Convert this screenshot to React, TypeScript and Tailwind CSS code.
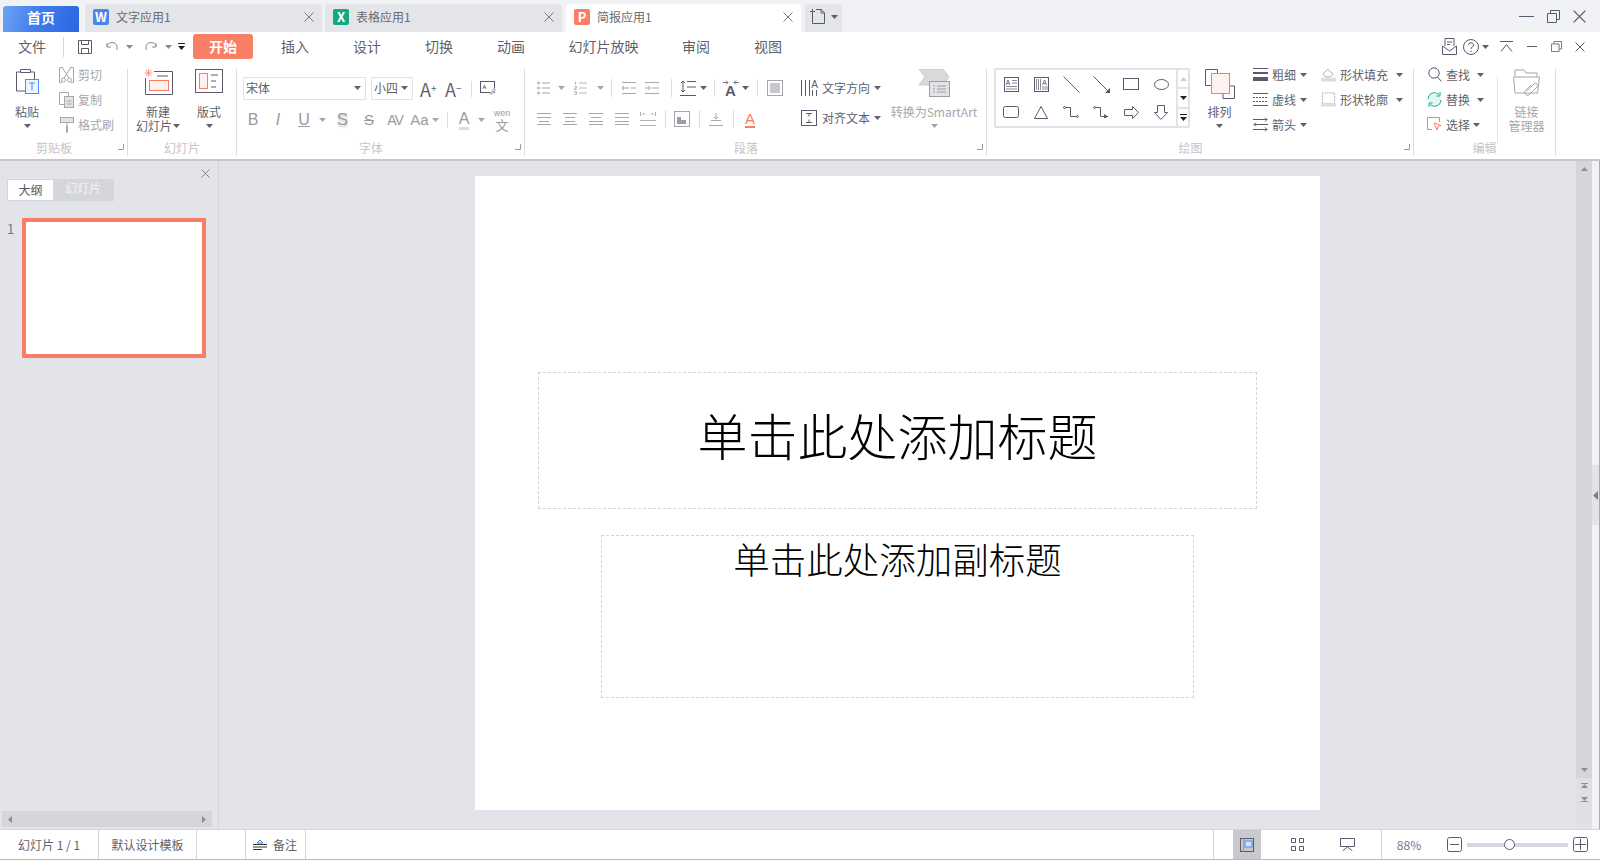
import type { ReactNode } from 'react'

const INK = '#5a5a6e'
const GRAY = '#a6a6ac'
const CORAL = '#f97e66'
const PINK = '#fef1ee'
const BLUE = '#4a8df0'

const Caret = ({ color = '#5f5f6e' }: { color?: string }) => (
  <svg width="7" height="4" viewBox="0 0 7 4" className="shrink-0">
    <path d="M0 0h7L3.5 4z" fill={color} />
  </svg>
)

const Close = ({ size = 10, color = '#77777f' }: { size?: number; color?: string }) => (
  <svg width={size} height={size} viewBox="0 0 10 10">
    <path d="M.5.5l9 9M9.5.5l-9 9" stroke={color} fill="none" />
  </svg>
)

const Restore = ({ size = 13 }: { size?: number }) => (
  <svg width={size} height={size} viewBox="0 0 13 13" fill="none" stroke={INK}>
    <path d="M.5 3.5h9v9h-9zM3.5 3V.5h9v9H10" />
  </svg>
)

const Sep = ({ className = 'h-[18px]' }: { className?: string }) => (
  <div className={`w-px bg-[#dcdde1] ${className}`} />
)

const Cell = ({ className, children }: { className: string; children?: ReactNode }) => (
  <div className={`flex h-full shrink-0 items-center justify-center ${className}`}>{children}</div>
)

const Tab = ({
  icon,
  title,
  className,
  active,
}: {
  icon: ReactNode
  title: string
  className: string
  active?: boolean
}) => (
  <div
    className={`flex h-[28px] items-center rounded-t-[3px] pr-[8px] pb-[3px] pl-[8px] text-[12px] text-[#6a6a74] ${
      active ? 'bg-white' : 'bg-[#e4e5e9]'
    } ${className}`}
  >
    {icon}
    <span className="ml-[7px]">{title}</span>
    <span className="ml-auto">
      <Close />
    </span>
  </div>
)

const AppIcon = ({ color, letter }: { color: string; letter: string }) => (
  <span
    className="flex h-[16px] w-[16px] items-center justify-center rounded-[2px] text-[13px] leading-none font-bold text-white"
    style={{ backgroundColor: color }}
  >
    {letter}
  </span>
)

const Group = ({
  className,
  label,
  launcher,
  children,
}: {
  className: string
  label: string
  launcher?: boolean
  children: ReactNode
}) => (
  <div className={`relative flex h-[87px] shrink-0 flex-col border-r border-[#dcdde1] ${className}`}>
    <div className="flex h-[71px]">{children}</div>
    <div className={`h-[16px] text-center text-[12px] leading-[16px] text-[#c4c4c9] ${launcher ? 'pr-[19px]' : ''}`}>
      {label}
    </div>
    {launcher && (
      <svg width="6" height="6" viewBox="0 0 6 6" className="absolute right-[3px] bottom-[6px]">
        <path d="M5.5 0v5.5H0" stroke="#9a9aa0" fill="none" />
      </svg>
    )}
  </div>
)

const Large = ({
  icon,
  lines,
  className,
  gray,
  caret = true,
}: {
  icon: ReactNode
  lines: string[]
  className: string
  gray?: boolean
  caret?: boolean
}) => (
  <div className={`flex shrink-0 flex-col items-center ${className}`}>
    <div className="flex h-[36px] items-start justify-center">{icon}</div>
    {lines.map((line) => (
      <div
        key={line}
        className={`flex h-[14px] items-center whitespace-nowrap text-[12px] leading-[14px] ${
          gray ? 'text-[#a6a6ac]' : 'text-[#5f5f6c]'
        }`}
      >
        {line}
        {lines.length === 2 && line === lines[1] && caret && (
          <span className="ml-[1px]">
            <Caret />
          </span>
        )}
      </div>
    ))}
    {lines.length === 1 && caret && (
      <div className="flex h-[14px] items-center">
        <Caret color={gray ? GRAY : undefined} />
      </div>
    )}
  </div>
)

const Row = ({
  icon,
  text,
  gray,
  caretClass,
}: {
  icon: ReactNode
  text: string
  gray?: boolean
  caretClass?: string
}) => (
  <div className="flex h-[25px] items-center">
    <span className="flex w-[15px] shrink-0 justify-center">{icon}</span>
    <span className={`ml-[4px] whitespace-nowrap text-[12px] ${gray ? 'text-[#a6a6ac]' : 'text-[#5f5f6c]'}`}>
      {text}
    </span>
    {caretClass && (
      <span className={`flex ${caretClass}`}>
        <Caret />
      </span>
    )}
  </div>
)

/* ---------- ribbon icons ---------- */

const PasteIcon = () => (
  <svg width="23" height="25" viewBox="0 0 23 25" fill="none">
    <path d="M4 3H.5v19H9M15 3h3.5v7" stroke={INK} />
    <path d="M4.5.5h10v3h-10z" stroke={INK} />
    <rect x="9.5" y="10.5" width="13" height="14" fill="#eef5ff" stroke={BLUE} />
    <path d="M13 14h6M16 14v7.5" stroke={BLUE} />
  </svg>
)
const CutIcon = () => (
  <svg width="15" height="16" viewBox="0 0 15 16" fill="none" stroke={GRAY}>
    <path d="M4 .5H.5v15H3M11 .5h3.5v15H12M3.5 1l6.5 10M11.5 1L5 11" />
    <circle cx="4.5" cy="13" r="2" />
    <circle cx="10.5" cy="13" r="2" />
  </svg>
)
const CopyIcon = () => (
  <svg width="15" height="16" viewBox="0 0 15 16" fill="none" stroke={GRAY}>
    <path d="M5 12.5H.5V.5h9v4" />
    <rect x="5.5" y="4.5" width="9" height="11" fill="#e3e3e6" />
    <path d="M7.5 9h5M7.5 12h5" />
  </svg>
)
const BrushIcon = () => (
  <svg width="14" height="16" viewBox="0 0 14 16" fill="none">
    <rect x=".5" y=".5" width="13" height="5" fill="#e3e3e6" stroke={GRAY} />
    <path d="M7 6v3.5" stroke={GRAY} />
    <path d="M6 9h2v6l-1 1-1-1z" fill={GRAY} />
  </svg>
)
const NewSlideIcon = () => (
  <svg width="29" height="26" viewBox="0 0 29 26" fill="none">
    <path d="M10 2.5h18.5v23H1.5V9" stroke={INK} />
    <path d="M13 7h11" stroke={INK} />
    <rect x="5.5" y="11.5" width="19" height="10" fill={PINK} stroke={CORAL} />
    <path d="M4.5 0v8M.5 4h8M1.5 1l6 6M7.5 1l-6 6" stroke={CORAL} strokeWidth=".8" />
  </svg>
)
const LayoutIcon = () => (
  <svg width="28" height="24" viewBox="0 0 28 24" fill="none">
    <rect x=".5" y=".5" width="27" height="23" stroke={INK} />
    <rect x="4.5" y="4.5" width="8" height="15" fill={PINK} stroke={CORAL} />
    <path d="M16 6h7M16 12h5M16 18h5" stroke={INK} />
  </svg>
)
const AbIcon = () => (
  <svg width="16" height="15" viewBox="0 0 16 15" fill="none">
    <rect x=".5" y=".5" width="14" height="11" stroke={INK} />
    <path d="M3 8l1.5-4L6 8M3.5 6.5h2" stroke={INK} strokeWidth=".7" />
    <path d="M9 13l5-6 2 2-4 5z" fill="#c7c7cb" />
  </svg>
)
const Lines = ({ ys }: { ys: [number, number][] }) => (
  <svg width="14" height="14" viewBox="0 0 14 14" fill="none" stroke={GRAY}>
    {ys.map(([y, x], i) => (
      <path key={i} d={`M${x} ${y + 0.5}H${14 - x}`} />
    ))}
  </svg>
)
const BulletIcon = () => (
  <svg width="13" height="14" viewBox="0 0 13 14" fill="none" stroke={GRAY}>
    <circle cx="1.5" cy="2" r="1" />
    <circle cx="1.5" cy="7" r="1" />
    <circle cx="1.5" cy="12" r="1" />
    <path d="M5 2h8M5 7h8M5 12h8" />
  </svg>
)
const NumberIcon = () => (
  <svg width="13" height="14" viewBox="0 0 13 14" fill="none" stroke={GRAY}>
    <path d="M1.5.5v3M.5 5.5h2V7h-2v1.5h2M.5 10.5h2v3h-2M.5 12h2M5 2h8M5 7h8M5 12h8" strokeWidth=".8" />
  </svg>
)
const IndentIcon = ({ flip }: { flip?: boolean }) => (
  <svg width="14" height="14" viewBox="0 0 14 14" fill="none" stroke={GRAY}>
    <path d={flip ? 'M0 1.5h14M0 12.5h14M0 7h5M3.5 5l2 2-2 2M7 7h7' : 'M0 1.5h14M0 12.5h14M0 7h7M2 5L0 7l2 2M9 7h5'} />
  </svg>
)
const LineSpaceIcon = () => (
  <svg width="16" height="16" viewBox="0 0 16 16" fill="none" stroke={INK}>
    <path d="M3 1v11M1 3l2-2 2 2M1 10l2 2 2-2M7 1.5h9M7 7h9M0 15.5h16" />
  </svg>
)
const TextDirIcon = () => (
  <div className="flex w-[16px] flex-col items-center">
    <svg width="16" height="5" viewBox="0 0 16 5" fill="none" stroke={INK} strokeWidth=".8">
      <path d="M0 2.5h5M3 .5l2 2-2 2M16 2.5h-5M13 .5l-2 2 2 2" />
    </svg>
    <span className="font-['Liberation_Sans',sans-serif] text-[15px] leading-[12px] font-bold text-[#5a5a6e]">A</span>
  </div>
)
const BoxIcon = () => (
  <svg width="16" height="16" viewBox="0 0 16 16" fill="none">
    <rect x=".5" y=".5" width="15" height="15" stroke={GRAY} />
    <rect x="3" y="3" width="10" height="10" fill="#c9c9cd" />
  </svg>
)
const DistributeIcon = () => (
  <svg width="16" height="14" viewBox="0 0 16 14" fill="none" stroke={GRAY}>
    <path d="M0 8.5h16M0 13.5h16M.5 0v4M15.5 0v4M2 2h3M14 2h-3" strokeWidth=".9" />
  </svg>
)
const CornerIcon = () => (
  <svg width="16" height="16" viewBox="0 0 16 16" fill="none">
    <rect x=".5" y=".5" width="15" height="15" stroke={GRAY} />
    <path d="M3 6h4v3h5v4H3z" fill="#9c9ca2" />
  </svg>
)
const BaselineIcon = () => (
  <svg width="14" height="14" viewBox="0 0 14 14" fill="none" stroke={GRAY}>
    <path d="M7 1v6M5 5l2 2 2-2M2 8.5h10M0 13.5h14" />
  </svg>
)
const VerticalTextIcon = () => (
  <div className="flex h-[16px] w-[17px] items-start justify-between">
    <svg width="9" height="16" viewBox="0 0 9 16" fill="none" stroke={INK}>
      <path d="M.5 0v16M4.5 0v16M8.5 0v16" />
    </svg>
    <div className="flex flex-col items-center">
      <span className="font-['Liberation_Sans',sans-serif] text-[10px] leading-[9px] text-[#5a5a6e]">A</span>
      <svg width="6" height="6" viewBox="0 0 6 6" fill="none" stroke={INK} className="mt-[1px]">
        <path d="M.5 0v6M4.5 0v6" />
      </svg>
    </div>
  </div>
)
const AlignTextIcon = () => (
  <svg width="16" height="16" viewBox="0 0 16 16" fill="none" stroke={INK}>
    <rect x=".5" y=".5" width="15" height="15" />
    <path d="M5 3.5h6M8 3.5v3M5 12.5h6M8 12.5v-3" />
  </svg>
)
const SmartArtIcon = () => (
  <svg width="32" height="28" viewBox="0 0 32 28" fill="none">
    <path d="M1 0h24l6 8-6 8H1l6-8z" fill="#d9d9dc" stroke="#c9c9cd" />
    <rect x="11.5" y="12.5" width="20" height="15" fill="#e3e3e6" stroke="#9c9ca2" />
    <path d="M15 17h2M19 17h9M15 20h2M19 20h9M15 23h2M19 23h9" stroke="#9c9ca2" />
  </svg>
)
const ArrangeIcon = () => (
  <svg width="30" height="30" viewBox="0 0 30 30" fill="none">
    <path d="M6 16.5H.5V.5h12V5M24 17h5.5v12.5H18V24" stroke={INK} />
    <rect x="6.5" y="4.5" width="18" height="20" fill={PINK} stroke={CORAL} />
  </svg>
)
const WeightIcon = () => (
  <svg width="15" height="13" viewBox="0 0 15 13" fill={INK}>
    <path d="M0 0h15v1H0zM0 4h15v2H0zM0 9h15v4H0z" />
  </svg>
)
const DashIcon = () => (
  <svg width="15" height="13" viewBox="0 0 15 13" fill="none" stroke={INK}>
    <path d="M0 .5h15M0 12.5h15" />
    <path d="M0 4.5h15M0 8.5h15" strokeDasharray="2 1" />
  </svg>
)
const ArrowsIcon = () => (
  <svg width="15" height="15" viewBox="0 0 15 15" fill="none" stroke={INK}>
    <path d="M0 2.5h14M12 .5l2 2-2 2M15 7.5H1M3 5.5l-2 2 2 2M0 12.5h14M12 10.5l2 2-2 2" />
  </svg>
)
const FillIcon = () => (
  <svg width="16" height="15" viewBox="0 0 16 15">
    <path d="M2 7l5-5 6 5-3 3H5z" fill="none" stroke={GRAY} />
    <path d="M0 11h16v4H0z" fill="#dcdde1" />
  </svg>
)
const OutlineIcon = () => (
  <svg width="16" height="15" viewBox="0 0 16 15">
    <path d="M1.5 11V.5h13V11" fill="none" stroke={GRAY} strokeDasharray="2 1" />
    <path d="M0 11h16v4H0z" fill="#dcdde1" />
  </svg>
)
const SearchIcon = () => (
  <svg width="14" height="15" viewBox="0 0 14 15" fill="none" stroke={INK}>
    <circle cx="6" cy="6" r="5.2" />
    <path d="M9.5 10l4 4.5" />
  </svg>
)
const ReplaceIcon = () => (
  <svg width="15" height="15" viewBox="0 0 15 15" fill="none">
    <circle cx="7.5" cy="7.5" r="5.5" fill="#e4f6f1" />
    <path d="M1 7a6.5 6.5 0 0 1 11-4.5M14 8a6.5 6.5 0 0 1-11 4.5" stroke="#10ab85" />
    <path d="M13 0v4H9.5M2 15v-4h3.5" stroke="#10ab85" />
  </svg>
)
const SelectIcon = () => (
  <svg width="15" height="15" viewBox="0 0 15 15" fill="none" stroke={CORAL}>
    <path d="M5 12.5H.5V.5h12V5" />
    <path d="M7 6l7 2.5-3 1-1 3.5z" fill="#fff" />
  </svg>
)
const LinkIcon = () => (
  <svg width="27" height="29" viewBox="0 0 27 29" fill="none" stroke={GRAY}>
    <path d="M2 7V1h9l2 3h11v4M.5 8h26l-2 16H2z" fill="#fff" />
    <path d="M14 22l7-7a2 2 0 0 1 3 3l-8 8a3 3 0 0 1-4-4l6-6" />
  </svg>
)

/* ---------- gallery shapes ---------- */

const shapes: ReactNode[] = [
  <svg key="tb" width="15" height="15" viewBox="0 0 15 15" fill="none" stroke={INK}>
    <rect x=".5" y=".5" width="14" height="14" />
    <path d="M2 8l2-5 2 5M3 6.5h2" strokeWidth=".8" />
    <path d="M8 3.5h5M8 6h5M2 9.5h11M2 12h11" stroke="#8c8c98" />
  </svg>,
  <svg key="vtb" width="15" height="15" viewBox="0 0 15 15" fill="none" stroke={INK}>
    <rect x=".5" y=".5" width="14" height="14" />
    <path d="M2.5 2v11M4.5 2v11M6.5 2v11M9 9v4M11 9v4M13 9v4" stroke="#8c8c98" />
    <path d="M8.5 8l2-5 2 5M9.5 6.5h2" strokeWidth=".8" />
  </svg>,
  <svg key="line" width="17" height="17" viewBox="0 0 17 17" fill="none" stroke={INK}>
    <path d="M.5.5l16 16" />
  </svg>,
  <svg key="arrow" width="17" height="17" viewBox="0 0 17 17" fill="none" stroke={INK}>
    <path d="M.5.5l15 15" />
    <path d="M17 12v5h-5z" fill={INK} stroke="none" />
  </svg>,
  <svg key="rect" width="16" height="12" viewBox="0 0 16 12" fill="none" stroke={INK}>
    <rect x=".5" y=".5" width="15" height="11" />
  </svg>,
  <svg key="oval" width="15" height="11" viewBox="0 0 15 11" fill="none" stroke={INK}>
    <ellipse cx="7.5" cy="5.5" rx="7" ry="5" />
  </svg>,
  <svg key="round" width="16" height="12" viewBox="0 0 16 12" fill="none" stroke={INK}>
    <rect x=".5" y=".5" width="15" height="11" rx="2" />
  </svg>,
  <svg key="tri" width="14" height="13" viewBox="0 0 14 13" fill="none" stroke={INK}>
    <path d="M7 .5l6.5 12H.5z" />
  </svg>,
  <svg key="elbow" width="16" height="12" viewBox="0 0 16 12" fill="none" stroke={INK}>
    <path d="M2 1.5h5.5v9H14" />
    <circle cx="1.5" cy="1.5" r="1" />
    <circle cx="14.5" cy="10.5" r="1" />
  </svg>,
  <svg key="elbow2" width="16" height="12" viewBox="0 0 16 12" fill="none" stroke={INK}>
    <path d="M2 1.5h5.5v9H15" />
    <circle cx="1.5" cy="1.5" r="1" />
    <path d="M11 8l4 2.5-4 2.5z" fill={INK} stroke="none" />
  </svg>,
  <svg key="right" width="15" height="13" viewBox="0 0 15 13" fill="none" stroke={INK}>
    <path d="M.5 3.5h8V.5l6 6-6 6v-3h-8z" />
  </svg>,
  <svg key="down" width="14" height="15" viewBox="0 0 14 15" fill="none" stroke={INK}>
    <path d="M3.5.5h7v7h3l-6.5 7-6.5-7h3z" />
  </svg>,
]

const App = () => {
  return (
    <div className="flex h-[860px] w-[1600px] flex-col overflow-hidden bg-white font-['Noto_Sans_CJK_SC',sans-serif] text-[#5f5f6c]">
      {/* title bar */}
      <div className="flex h-[32px] shrink-0 items-end bg-[#f1f2f6] pl-[3px]">
        <div className="flex h-[26px] w-[76px] items-center justify-center rounded-t-[3px] bg-[linear-gradient(105deg,#6ea3f3_0%,#3f7de9_45%,#2a67e2_100%)] pb-[3px] text-[14px] font-bold text-white">
          首页
        </div>
        <Tab className="ml-[6px] w-[237px]" icon={<AppIcon color="#4a86e8" letter="W" />} title="文字应用1" />
        <Tab className="ml-[3px] w-[237px]" icon={<AppIcon color="#10ab85" letter="X" />} title="表格应用1" />
        <Tab active className="ml-[4px] w-[235px]" icon={<AppIcon color={CORAL} letter="P" />} title="简报应用1" />
        <div className="ml-[4px] flex h-[28px] w-[37px] items-center rounded-t-[3px] bg-[#e4e5e9] pb-[3px] pl-[5px]">
          <svg width="16" height="15" viewBox="0 0 16 15" fill="none" stroke={INK}>
            <path d="M2.5 4v10.5h12V4l-3-3.5H6M0 2.5h5M2.5 0v5M11 .5V4h3.5" />
          </svg>
          <span className="ml-[5px] flex">
            <Caret />
          </span>
        </div>
        <div className="ml-auto flex h-full items-center pr-[14px]">
          <div className="h-px w-[15px] bg-[#5a5a6e]" />
          <span className="ml-[13px] flex">
            <Restore />
          </span>
          <span className="ml-[13px] flex">
            <Close size={13} color={INK} />
          </span>
        </div>
      </div>

      {/* menu row */}
      <div className="flex h-[30px] shrink-0 items-center pb-[1px] pl-[18px] text-[14px]">
        <span className="w-[28px] whitespace-nowrap">文件</span>
        <div className="ml-[17px] h-[20px] w-px bg-[#d5d6da]" />
        <svg width="14" height="14" viewBox="0 0 14 14" fill="none" stroke={INK} className="ml-[14px]">
          <path d="M.5.5h13v13H.5zM3.5.5v4h7v-4M3.5 13.5v-5h7v5" />
        </svg>
        <svg width="12" height="9" viewBox="0 0 12 9" fill="none" stroke="#8a8a94" className="ml-[14px]">
          <path d="M1 4.5A5 4 0 0 1 11 4.5V8M1 1v4h4" />
        </svg>
        <span className="ml-[8px] flex">
          <Caret color="#8a8a94" />
        </span>
        <svg width="12" height="9" viewBox="0 0 12 9" fill="none" stroke="#8a8a94" className="ml-[12px]">
          <path d="M11 4.5A5 4 0 0 0 1 4.5V8M11 1v4H7" />
        </svg>
        <span className="ml-[8px] flex">
          <Caret color="#8a8a94" />
        </span>
        <svg width="7" height="8" viewBox="0 0 7 8" className="ml-[6px]">
          <path d="M0 0h7v1H0zM0 3h7L3.5 7z" fill="#222" />
        </svg>
        <div className="ml-[8px] flex h-[25px] w-[60px] items-center justify-center rounded-[3px] bg-[#f97e66] font-bold text-white">
          开始
        </div>
        <span className="ml-[6px] w-[72px] text-center">插入</span>
        <span className="w-[72px] text-center">设计</span>
        <span className="w-[72px] text-center">切换</span>
        <span className="w-[72px] text-center">动画</span>
        <span className="w-[113px] text-center">幻灯片放映</span>
        <span className="w-[72px] text-center">审阅</span>
        <span className="w-[72px] text-center">视图</span>
        <div className="ml-auto flex items-center pr-[15px]">
          <svg width="15" height="17" viewBox="0 0 15 17" fill="none" stroke={INK}>
            <path d="M3 8V.5h9V8M5 4h5M5 6.5h3M.5 8v8.5h14V8M.5 8l7 5 7-5" />
          </svg>
          <svg width="16" height="16" viewBox="0 0 16 16" fill="none" stroke={INK} className="ml-[6px]">
            <circle cx="8" cy="8" r="7.5" />
            <path d="M5.5 6a2.5 2.3 0 1 1 3.5 2.2c-.8.4-1 .8-1 1.800M8 11.5V13" />
          </svg>
          <span className="ml-[3px] flex">
            <Caret />
          </span>
          <svg width="13" height="11" viewBox="0 0 13 11" fill="none" stroke={INK} className="ml-[11px]">
            <path d="M0 .5h13M1 10.5l5.5-7 5.5 7" />
          </svg>
          <div className="ml-[14px] h-px w-[10px] bg-[#5a5a6e]" />
          <span className="ml-[14px] flex">
            <Restore size={11} />
          </span>
          <span className="ml-[13px] flex">
            <Close size={10} color={INK} />
          </span>
        </div>
      </div>

      {/* ribbon */}
      <div className="flex h-[99px] shrink-0 border-b-2 border-[#c6c8c8] pt-[7px]">
        <Group className="w-[128px]" label="剪贴板" launcher>
          <Large className="w-[54px]" icon={<PasteIcon />} lines={['粘贴']} />
          <div className="-mt-[7px] ml-[5px]">
            <Row gray icon={<CutIcon />} text="剪切" />
            <Row gray icon={<CopyIcon />} text="复制" />
            <Row gray icon={<BrushIcon />} text="格式刷" />
          </div>
        </Group>

        <Group className="w-[109px]" label="幻灯片">
          <Large className="ml-[6px] w-[48px]" icon={<NewSlideIcon />} lines={['新建', '幻灯片']} />
          <Large className="ml-[7px] w-[40px]" icon={<LayoutIcon />} lines={['版式']} />
        </Group>

        <Group className="w-[288px]" label="字体" launcher>
          <div className="pt-[8px]">
            <div className="flex h-[23px] items-center">
              <div className="ml-[6px] flex h-full w-[123px] items-center justify-between border border-[#e0e1e4] pr-[4px] pb-[2px] pl-[2px] text-[12px]">
                宋体
                <Caret />
              </div>
              <div className="ml-[5px] flex h-full w-[42px] items-center justify-between border border-[#e0e1e4] pr-[4px] pb-[2px] pl-[2px] text-[12px]">
                小四
                <Caret />
              </div>
              <span className="ml-[7px] w-[16px] text-[18px] leading-none whitespace-nowrap">
                A<sup className="text-[10px]">+</sup>
              </span>
              <span className="ml-[9px] w-[17px] text-[18px] leading-none whitespace-nowrap">
                A<sup className="text-[10px]">−</sup>
              </span>
              <Sep className="ml-[9px] h-[16px]" />
              <span className="ml-[8px] flex">
                <AbIcon />
              </span>
            </div>
            <div className="mt-[8px] flex h-[24px] pl-[4px] font-['Liberation_Sans',sans-serif] text-[#9a9aa0]">
              <Cell className="w-[24px] text-[16px]">B</Cell>
              <Cell className="w-[26px] text-[16px] italic">I</Cell>
              <Cell className="w-[26px] text-[16px] underline">U</Cell>
              <Cell className="w-[11px]"><Caret color={GRAY} /></Cell>
              <Cell className="w-[29px] text-[17px] [text-shadow:0_2px_2px_#ccc]">S</Cell>
              <Cell className="w-[24px] text-[15px] line-through">S</Cell>
              <Cell className="w-[28px] text-[14px] tracking-[-1px]">AV</Cell>
              <Cell className="w-[21px] text-[15px]">Aa</Cell>
              <Cell className="w-[10px]"><Caret color={GRAY} /></Cell>
              <Cell className="w-[14px]"><Sep className="h-[16px]" /></Cell>
              <Cell className="w-[20px] text-[16px]">
                <span className="border-b-[3px] border-[#dcdde1] leading-[17px]">A</span>
              </Cell>
              <Cell className="w-[14px]"><Caret color={GRAY} /></Cell>
              <Cell className="w-[28px] flex-col text-[9px] leading-[9px]">
                wen
                <span className="font-['Noto_Sans_CJK_SC',sans-serif] text-[13px] leading-[13px]">文</span>
              </Cell>
            </div>
          </div>
        </Group>

        <Group className="w-[462px]" label="段落" launcher>
          <div className="ml-[6px] w-[270px] pt-[7px]">
            <div className="flex h-[24px]">
              <Cell className="w-[25px]"><BulletIcon /></Cell>
              <Cell className="w-[10px]"><Caret color={GRAY} /></Cell>
              <Cell className="w-[29px]"><NumberIcon /></Cell>
              <Cell className="w-[10px]"><Caret color={GRAY} /></Cell>
              <Cell className="w-[13px]"><Sep /></Cell>
              <Cell className="w-[21px]"><IndentIcon /></Cell>
              <Cell className="w-[26px]"><IndentIcon flip /></Cell>
              <Cell className="w-[12px]"><Sep /></Cell>
              <Cell className="w-[22px]"><LineSpaceIcon /></Cell>
              <Cell className="w-[8px]"><Caret /></Cell>
              <Cell className="w-[14px]"><Sep /></Cell>
              <Cell className="w-[19px]"><TextDirIcon /></Cell>
              <Cell className="w-[10px]"><Caret /></Cell>
              <Cell className="w-[14px]"><Sep /></Cell>
              <Cell className="w-[21px]"><BoxIcon /></Cell>
            </div>
            <div className="mt-[7px] flex h-[24px]">
              <Cell className="w-[26px]"><Lines ys={[[1, 0], [5, 0], [9, 2], [12, 0]]} /></Cell>
              <Cell className="w-[26px]"><Lines ys={[[1, 0], [5, 2], [9, 2], [12, 0]]} /></Cell>
              <Cell className="w-[26px]"><Lines ys={[[1, 0], [5, 2], [9, 0], [12, 0]]} /></Cell>
              <Cell className="w-[26px]"><Lines ys={[[1, 0], [5, 0], [9, 0], [12, 0]]} /></Cell>
              <Cell className="w-[25px]"><DistributeIcon /></Cell>
              <Cell className="w-[10px]"><Sep /></Cell>
              <Cell className="w-[24px]"><CornerIcon /></Cell>
              <Cell className="w-[11px]"><Sep /></Cell>
              <Cell className="w-[22px]"><BaselineIcon /></Cell>
              <Cell className="w-[13px]"><Sep /></Cell>
              <Cell className="w-[20px]">
                <span className="border-b-2 border-[#f97e66] font-['Liberation_Sans',sans-serif] text-[15px] leading-[15px] text-[#f97e66]">
                  A
                </span>
              </Cell>
            </div>
          </div>
          <div className="w-[89px] pt-[7px]">
            <div className="flex h-[24px] items-center text-[12px] whitespace-nowrap">
              <VerticalTextIcon />
              <span className="ml-[4px]">文字方向</span>
              <span className="ml-[4px] flex"><Caret /></span>
            </div>
            <div className="mt-[6px] flex h-[24px] items-center text-[12px] whitespace-nowrap">
              <AlignTextIcon />
              <span className="ml-[5px]">对齐文本</span>
              <span className="ml-[4px] flex"><Caret /></span>
            </div>
          </div>
          <Large gray className="w-[88px]" icon={<SmartArtIcon />} lines={['转换为SmartArt']} />
        </Group>

        <Group className="w-[427px]" label="绘图" launcher>
          <div className="ml-[7px] -mt-[1px] flex h-[60px] w-[196px] rounded-[2px] border-2 border-[#e2e3e6]">
            <div className="grid w-[180px] grid-cols-6 grid-rows-2">
              {shapes.map((shape, i) => (
                <div key={i} className="flex items-center justify-center">
                  {shape}
                </div>
              ))}
            </div>
            <div className="flex w-[12px] flex-1 flex-col border-l-2 border-[#e2e3e6]">
              <div className="flex flex-1 items-center justify-center border-b-2 border-[#e2e3e6]">
                <svg width="7" height="4" viewBox="0 0 7 4"><path d="M0 4h7L3.5 0z" fill="#d0d0d4" /></svg>
              </div>
              <div className="flex flex-1 items-center justify-center border-b-2 border-[#e2e3e6]">
                <Caret color="#222" />
              </div>
              <div className="flex flex-1 flex-col items-center justify-center gap-[2px]">
                <div className="h-px w-[7px] bg-[#222]" />
                <Caret color="#222" />
              </div>
            </div>
          </div>
          <Large className="w-[59px]" icon={<ArrangeIcon />} lines={['排列']} />
          <div className="-mt-[7px] ml-[4px] w-[68px]">
            <Row icon={<WeightIcon />} text="粗细" caretClass="ml-[4px]" />
            <Row icon={<DashIcon />} text="虚线" caretClass="ml-[4px]" />
            <Row icon={<ArrowsIcon />} text="箭头" caretClass="ml-[4px]" />
          </div>
          <div className="-mt-[7px]">
            <Row icon={<FillIcon />} text="形状填充" caretClass="ml-[8px]" />
            <Row icon={<OutlineIcon />} text="形状轮廓" caretClass="ml-[8px]" />
          </div>
        </Group>

        <Group className="w-[142px]" label="编辑">
          <div className="-mt-[7px] ml-[13px] w-[70px]">
            <Row icon={<SearchIcon />} text="查找" caretClass="ml-[7px]" />
            <Row icon={<ReplaceIcon />} text="替换" caretClass="ml-[7px]" />
            <Row icon={<SelectIcon />} text="选择" caretClass="ml-[3px]" />
          </div>
          <div className="mt-[8px] h-[66px] w-px bg-[#e2e3e6]" />
          <Large gray caret={false} className="w-[57px]" icon={<LinkIcon />} lines={['链接', '管理器']} />
        </Group>
      </div>

      {/* body */}
      <div className="flex h-[668px] shrink-0 bg-[#e3e4e9]">
        <aside className="flex w-[219px] shrink-0 flex-col border-r border-[#d5d6da]">
          <div className="flex h-[18px] justify-end pt-[8px] pr-[8px]">
            <Close size={9} />
          </div>
          <div className="ml-[7px] flex h-[22px] w-[107px] border border-[#d5d6da] text-[12px]">
            <span className="flex w-[45px] items-center justify-center bg-white text-[#55555f]">大纲</span>
            <span className="flex flex-1 items-start justify-center bg-[#d5d6da] leading-[16px] text-[#f3f3f5]">幻灯片</span>
          </div>
          <div className="mt-[17px] flex">
            <span className="ml-[7px] w-[15px] text-[13px] leading-[22px] text-[#77778a]">1</span>
            <div className="h-[140px] w-[184px] border-4 border-[#f97e66] bg-white" />
          </div>
          <div className="mt-auto mb-[2px] ml-[2px] flex h-[16px] w-[210px] items-center justify-between bg-[#d5d6da] px-[6px]">
            <svg width="4" height="7" viewBox="0 0 4 7"><path d="M4 0v7L0 3.500z" fill="#8f8f95" /></svg>
            <svg width="4" height="7" viewBox="0 0 4 7"><path d="M0 0v7l4-3.500z" fill="#8f8f95" /></svg>
          </div>
        </aside>

        <main className="flex min-w-0 flex-1 justify-center pt-[15px]">
          <div className="flex h-[634px] w-[845px] flex-col items-center bg-white font-['Noto_Sans_CJK_SC',serif] text-black">
            <div className="mt-[196px] flex h-[137px] w-[719px] items-center justify-center border border-dashed border-[#d4d4d4] pb-[14px] text-[50px] leading-none font-light">
              单击此处添加标题
            </div>
            <div className="mt-[26px] h-[163px] w-[593px] border border-dashed border-[#d4d4d4] text-center text-[36.5px] leading-[46px] font-light">
              单击此处添加副标题
            </div>
          </div>
        </main>

        <div className="flex h-[664px] w-[16px] shrink-0 flex-col items-center bg-[#d5d6da] pt-[6px]">
          <svg width="7" height="4" viewBox="0 0 7 4"><path d="M0 4h7L3.5 0z" fill="#8f8f95" /></svg>
          <div className="mt-auto flex h-[57px] w-full flex-col items-center">
            <div className="flex h-[10px] w-full items-start justify-center">
              <Caret color="#8f8f95" />
            </div>
            <div className="flex w-full flex-1 flex-col items-center bg-[#dfe0e5] pt-[5px]">
              <div className="h-px w-[7px] bg-[#8f8f95]" />
              <svg width="7" height="4" viewBox="0 0 7 4"><path d="M0 4h7L3.5 0z" fill="#8f8f95" /></svg>
              <div className="mt-[9px] flex"><Caret color="#8f8f95" /></div>
              <div className="h-px w-[7px] bg-[#8f8f95]" />
            </div>
          </div>
        </div>
        <div className="w-[8px] shrink-0 border-r border-[#a9a9ae] bg-[#f1f2f6] pt-[304px]">
          <div className="flex h-[60px] items-center bg-[#e3e4e9] pl-[1px]">
            <svg width="5" height="9" viewBox="0 0 5 9"><path d="M5 0v9L0 4.500z" fill="#7d7d85" /></svg>
          </div>
        </div>
      </div>

      {/* status bar */}
      <div className="flex h-[31px] shrink-0 items-stretch border-y border-t-[#d5d6da] border-b-[#b9b9bd] text-[12px]">
        <div className="flex w-[99px] items-center justify-center border-r border-[#d5d6da]">幻灯片 1 / 1</div>
        <div className="flex w-[98px] items-center justify-center border-r border-[#d5d6da]">默认设计模板</div>
        <div className="w-[49px] border-r border-[#d5d6da]" />
        <div className="flex w-[60px] items-center border-r border-[#d5d6da] pl-[7px]">
          <svg width="14" height="12" viewBox="0 0 14 12" fill="none">
            <path d="M4 4l3-3 3 3z" stroke="#2f7de1" />
            <path d="M0 5.5h14M0 8h14M0 10.5h9" stroke="#333" />
          </svg>
          <span className="ml-[6px]">备注</span>
        </div>
        <div className="ml-auto flex w-[387px] items-stretch border-l border-[#d5d6da] pr-[12px]">
          <div className="ml-[19px] flex w-[28px] items-center justify-center bg-[#c8c9cd]">
            <svg width="14" height="14" viewBox="0 0 14 14" fill="none">
              <rect x=".5" y=".5" width="13" height="13" stroke={INK} />
              <path d="M3.5 .5v13" stroke="#9a9aa6" />
              <rect x="5" y="3" width="7" height="6" fill="#cfe2ff" stroke={BLUE} />
            </svg>
          </div>
          <div className="ml-[22px] flex w-[28px] items-center justify-center">
            <svg width="13" height="13" viewBox="0 0 13 13" fill="none" stroke={INK}>
              <path d="M.5.5h4v4h-4zM8.5.5h4v4h-4zM.5 8.5h4v4h-4zM8.5 8.5h4v4h-4z" />
            </svg>
          </div>
          <div className="ml-[22px] flex w-[28px] items-center justify-center">
            <svg width="15" height="13" viewBox="0 0 15 13" fill="none" stroke={INK}>
              <path d="M.5.5h14v8H.5zM7.5 9l-5 4M7.5 9l5 4" />
            </svg>
          </div>
          <div className="ml-[20px] w-px bg-[#d5d6da]" />
          <div className="flex w-[54px] items-center justify-center text-[#77778a]">88%</div>
          <div className="ml-[11px] flex flex-1 items-center">
            <svg width="15" height="15" viewBox="0 0 15 15" fill="none" stroke={INK}>
              <rect x=".5" y=".5" width="14" height="14" rx="2" />
              <path d="M3 7.5h9" />
            </svg>
            <div className="relative ml-[5px] h-[4px] w-[101px] bg-[#d5d8e2]">
              <div className="absolute -top-[4px] left-[37px] h-[11px] w-[11px] rounded-full border border-[#5a5a6e] bg-white" />
            </div>
            <svg width="15" height="15" viewBox="0 0 15 15" fill="none" stroke={INK} className="ml-[5px]">
              <rect x=".5" y=".5" width="14" height="14" rx="2" />
              <path d="M2 7.5h11M7.5 2v11" />
            </svg>
          </div>
        </div>
      </div>
    </div>
  )
}

export default App
